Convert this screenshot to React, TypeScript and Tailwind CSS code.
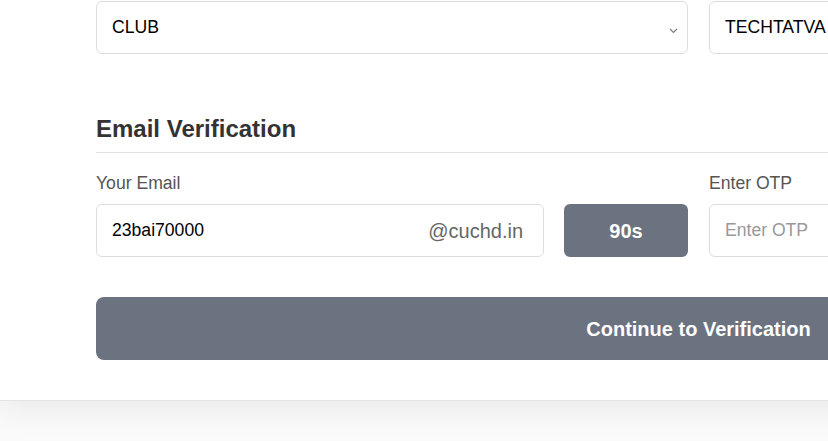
import React from 'react';

const ChevronDown: React.FC = () => (
  <svg width="9" height="6" viewBox="0 0 9 6" fill="none" className="absolute right-[10px] top-[27px]">
    <path d="M1 1l3.5 3.5L8 1" stroke="#7a7a7a" strokeWidth="1.1" />
  </svg>
);

export default function App() {
  const [email, setEmail] = React.useState('23bai70000');
  const [otp, setOtp] = React.useState('');

  return (
    <div className="w-[828px] h-[441px] overflow-hidden bg-[#fafafa] font-['Liberation_Sans',Arial,sans-serif]">
      <div className="w-[1397px] bg-white pl-[96px] pr-[96px] pt-px pb-[40px] border-b border-[#e4e4e4] shadow-[0_8px_30px_rgba(0,0,0,0.07)]">
        {/* club / event row */}
        <div className="grid grid-cols-2 gap-[21px]">
          <div className="relative">
            <select
              defaultValue="CLUB"
              className="w-full h-[53px] appearance-none rounded-[6px] border border-[#dddddd] bg-white pl-[15px] pr-8 text-[17.6px] text-black outline-none"
            >
              <option>CLUB</option>
              <option>DEPARTMENT</option>
            </select>
            <ChevronDown />
          </div>
          <input
            readOnly
            value="TECHTATVA"
            className="w-full h-[53px] rounded-[6px] border border-[#dddddd] bg-white px-[15px] text-[17.6px] text-black outline-none"
          />
        </div>

        {/* email verification */}
        <h2 className="mt-[60px] pb-[9px] border-b border-[#e0e0e0] text-[24px] leading-[29px] font-bold text-[#333333]">
          Email Verification
        </h2>

        <div className="mt-[17px] grid grid-cols-2 gap-[21px]">
          <div>
            <label className="block mb-2 text-[17.6px] leading-[26px] text-[#555555]">Your Email</label>
            <div className="flex gap-[20px]">
              <div className="flex items-center w-[448px] h-[53px] rounded-[6px] border border-[#dddddd] bg-white pl-[15px] pr-5">
                <input
                  value={email}
                  onChange={(e) => setEmail(e.target.value)}
                  className="flex-1 min-w-0 bg-transparent text-[17.6px] text-black outline-none"
                />
                <span className="text-[20px] text-[#666666]">@cuchd.in</span>
              </div>
              <button className="flex-1 h-[53px] rounded-[6px] bg-[#6b7280] text-[20px] font-bold text-white">
                90s
              </button>
            </div>
          </div>
          <div>
            <label className="block mb-2 text-[17.6px] leading-[26px] text-[#555555]">Enter OTP</label>
            <input
              value={otp}
              onChange={(e) => setOtp(e.target.value)}
              placeholder="Enter OTP"
              className="w-full h-[53px] rounded-[6px] border border-[#dddddd] bg-white px-[15px] text-[17.6px] text-black placeholder:text-[#999999] outline-none"
            />
          </div>
        </div>

        <button className="mt-[40px] w-full h-[63px] rounded-[8px] bg-[#6b7280] text-[20px] font-bold text-white">
          Continue to Verification
        </button>
      </div>
    </div>
  );
}
